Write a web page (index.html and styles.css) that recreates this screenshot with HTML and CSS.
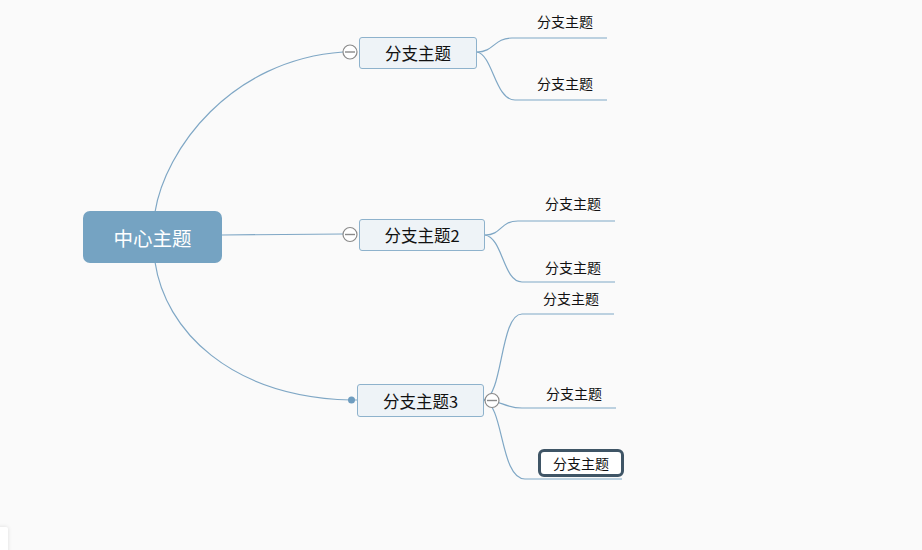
FILE: index.html
```html
<!DOCTYPE html>
<html>
<head>
<meta charset="utf-8">
<link rel="stylesheet" href="styles.css">
</head>
<body>
<div class="canvas">
  <svg class="links" width="922" height="550" viewBox="0 0 922 550">
    <g fill="none" stroke="#7fa7c5" stroke-width="1.2">
      <path d="M155,212 C165,150 230,60 343,52"/>
      <path d="M222,235 L343,234"/>
      <path d="M155,262 C165,330 230,397 351,400 L358,400"/>
      <path d="M477,52 C494,52 494,38 512,38 L607,38"/>
      <path d="M477,52 C493,55 495,100 515,100 L607,100"/>
      <path d="M485,235 C502,235 500,221 518,221 L615,221"/>
      <path d="M485,235 C503,238 503,282 522,282 L615,282"/>
      <path d="M484,400 C503,396 500,314 522,314 L614,314"/>
      <path d="M484,400 C500,400 505,408 522,408 L616,408"/>
      <path d="M484,400 C504,405 500,479 525,479 L622,479"/>
    </g>
    <circle cx="351.5" cy="400" r="3.5" fill="#6f9dbf"/>
    <g fill="#fff" stroke="#8a8a8a" stroke-width="1.2">
      <circle cx="350" cy="52" r="7"/>
      <circle cx="350" cy="234.5" r="7"/>
      <circle cx="492" cy="400.5" r="7"/>
    </g>
    <g stroke="#8a8a8a" stroke-width="1.4">
      <path d="M345,52 H355"/>
      <path d="M345,234.5 H355"/>
      <path d="M487,400.5 H497"/>
    </g>
  </svg>

  <div class="node central">中心主题</div>

  <div class="node branch b1">分支主题</div>
  <div class="node branch b2">分支主题2</div>
  <div class="node branch b3">分支主题3</div>

  <div class="node sub s11">分支主题</div>
  <div class="node sub s12">分支主题</div>
  <div class="node sub s21">分支主题</div>
  <div class="node sub s22">分支主题</div>
  <div class="node sub s31">分支主题</div>
  <div class="node sub s32">分支主题</div>
  <div class="node sub selected s33">分支主题</div>

  <div class="corner"></div>
</div>
</body>
</html>
```
FILE: styles.css
```css
html, body {
  margin: 0;
  padding: 0;
  background: #fafafa;
}
.canvas {
  position: relative;
  width: 922px;
  height: 550px;
  overflow: hidden;
  background: #fafafa;
  font-family: "Noto Sans CJK SC", "Microsoft YaHei", sans-serif;
}
.links {
  position: absolute;
  left: 0;
  top: 0;
}
.node {
  position: absolute;
  display: flex;
  align-items: center;
  justify-content: center;
  box-sizing: border-box;
  white-space: nowrap;
  color: #111;
}
.central {
  left: 83px;
  top: 211px;
  width: 139px;
  height: 52px;
  background: #75a3c2;
  border-radius: 7px;
  color: #fff;
  font-size: 19.5px;
}
.branch {
  left: 359px;
  height: 32px;
  background: #eef3f7;
  border: 1px solid #8eb2cc;
  border-radius: 3px;
  font-size: 16.5px;
}
.b1 { top: 37px; width: 118px; }
.b2 { top: 219px; width: 126px; }
.b3 { left: 357px; top: 384px; width: 127px; height: 33px; }
.sub {
  font-size: 14px;
  height: 20px;
  width: 62px;
}
.s11 { left: 534px; top: 11px; }
.s12 { left: 534px; top: 73px; }
.s21 { left: 542px; top: 193px; }
.s22 { left: 542px; top: 257px; }
.s31 { left: 540px; top: 288px; }
.s32 { left: 543px; top: 383px; }
.selected {
  left: 538px;
  top: 449px;
  width: 86px;
  height: 28px;
  border: 3px solid #3f5566;
  border-radius: 6px;
  background: #fff;
}
.corner {
  position: absolute;
  left: -4px;
  top: 527px;
  width: 12px;
  height: 30px;
  background: #fff;
  box-shadow: 0 0 4px rgba(0, 0, 0, 0.12);
  border-radius: 2px;
}
```
